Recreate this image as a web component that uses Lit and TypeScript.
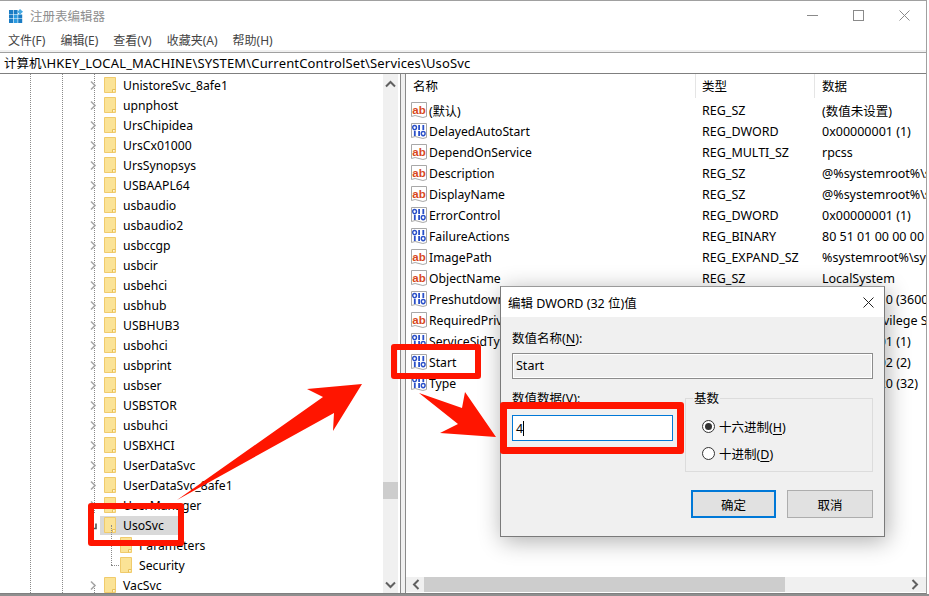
import { LitElement, html, css, svg } from 'lit';
import { customElement } from 'lit/decorators.js';

const TREE = [
  ['UnistoreSvc_8afe1', 'closed'], ['upnphost', 'closed'], ['UrsChipidea', 'closed'], ['UrsCx01000', 'closed'],
  ['UrsSynopsys', 'closed'], ['USBAAPL64', 'closed'], ['usbaudio', 'closed'], ['usbaudio2', 'closed'],
  ['usbccgp', 'closed'], ['usbcir', 'closed'], ['usbehci', 'closed'], ['usbhub', 'closed'],
  ['USBHUB3', 'closed'], ['usbohci', 'closed'], ['usbprint', 'closed'], ['usbser', 'closed'],
  ['USBSTOR', 'closed'], ['usbuhci', 'closed'], ['USBXHCI', 'closed'], ['UserDataSvc', 'closed'],
  ['UserDataSvc_8afe1', 'closed'], ['UserManager', 'closed'], ['UsoSvc', 'open'], ['Parameters', 'child'],
  ['Security', 'last'], ['VacSvc', 'closed'],
];

const VALUES = [
  ['sz', '(默认)', 'REG_SZ', '(数值未设置)'],
  ['bin', 'DelayedAutoStart', 'REG_DWORD', '0x00000001 (1)'],
  ['sz', 'DependOnService', 'REG_MULTI_SZ', 'rpcss'],
  ['sz', 'Description', 'REG_SZ', '@%systemroot%\\system32'],
  ['sz', 'DisplayName', 'REG_SZ', '@%systemroot%\\system32'],
  ['bin', 'ErrorControl', 'REG_DWORD', '0x00000001 (1)'],
  ['bin', 'FailureActions', 'REG_BINARY', '80 51 01 00 00 00 00 00'],
  ['sz', 'ImagePath', 'REG_EXPAND_SZ', '%systemroot%\\system32'],
  ['sz', 'ObjectName', 'REG_SZ', 'LocalSystem'],
  ['bin', 'PreshutdownTimeout', 'REG_DWORD', '0x00000e10 (3600)'],
  ['sz', 'RequiredPrivileges', 'REG_MULTI_SZ', 'SeAuditPrivilege SeChange'],
  ['bin', 'ServiceSidType', 'REG_DWORD', '0x00000001 (1)'],
  ['bin', 'Start', 'REG_DWORD', '0x00000002 (2)'],
  ['bin', 'Type', 'REG_DWORD', '0x00000020 (32)'],
];

const folderIcon = html`<svg class="folder" width="12" height="16" viewBox="0 0 12 16">
  <path d="M.5 .5H11.5V15.5H.5Z" fill="#fbe396" stroke="#f0cb6c"/>
  <path d="M8.5 15.5V12.5H11.5" fill="#fff6d6" stroke="#e8bf58"/>
</svg>`;

const chevron = (d: string, color = '#a6a6a6') => html`<svg width="9" height="11" viewBox="0 0 9 11">
  <path d=${d} fill="none" stroke=${color} stroke-width="1.6"/>
</svg>`;

const pageIcon = (inner: unknown) => html`<svg class="vicon" width="16" height="17" viewBox="0 0 16 17">
  <path d="M.5 .5H15.5V14.5Q12 16.5 8 14.5T.5 14.5Z" fill="#fff" stroke="#a8a8a8"/>
  ${inner}
</svg>`;

const szIcon = pageIcon(svg`<text x="8" y="11.5" text-anchor="middle" font-family="Liberation Sans, sans-serif" font-size="11.5" font-weight="700" fill="#d8481e">ab</text>`);

// "011" over "110", the usual binary value glyph
const binZeros = [[3.6, 4.6], [12.2, 10.6]];
const binOnes = [[7.2, 2], [11.4, 2], [2.9, 8], [7.2, 8]];
const binIcon = pageIcon(svg`
  ${binZeros.map(([x, y]) => svg`<ellipse cx=${x} cy=${y} rx="1.9" ry="2.1" fill="none" stroke="#2a50c8" stroke-width="1.4"/>`)}
  ${binOnes.map(([x, y]) => svg`<rect x=${x} y=${y} width="1.8" height="5" fill="#2a50c8"/>`)}
`);

@customElement('reg-tree')
export class RegTree extends LitElement {
  static styles = css`
    :host {
      display: flex;
      width: 400px;
      flex: none;
      min-height: 0;
    }
    .rows {
      flex: 1;
      position: relative;
      overflow: hidden;
      padding-top: 1px;
    }
    .guide {
      position: absolute;
      top: 0;
      bottom: 0;
      width: 0;
      border-left: 1px dotted #8a8a8a;
    }
    .row {
      height: 20px;
      display: flex;
      align-items: center;
      padding-left: 89px;
      position: relative;
      font-size: 12.2px;
      color: #000;
      white-space: nowrap;
    }
    .row.sub {
      padding-left: 120px;
    }
    .arrow {
      width: 15px;
      display: flex;
      position: relative;
    }
    .folder {
      margin-right: 7px;
      flex: none;
    }
    .selected {
      display: flex;
      align-items: center;
      background: #d9d9d9;
      height: 19px;
      width: 78px;
      margin-left: -4px;
      padding-left: 4px;
      box-sizing: border-box;
    }
    .hline {
      position: absolute;
      left: 111px;
      width: 8px;
      top: 10px;
      border-top: 1px dotted #8a8a8a;
    }
    .vline {
      position: absolute;
      left: 111px;
      top: -10px;
      height: 20px;
      border-left: 1px dotted #8a8a8a;
    }
    .bar {
      width: 15px;
      margin-right: 2px;
      background: #f0f0f0;
      display: flex;
      flex-direction: column;
      justify-content: space-between;
      align-items: center;
      position: relative;
      padding: 6px 0 4px;
      box-sizing: border-box;
    }
    .thumb {
      position: absolute;
      left: 0;
      right: 0;
      top: 408px;
      height: 17px;
      background: #cdcdcd;
    }
  `;

  render() {
    return html`
      <div class="rows">
        <div class="guide" style="left:30px"></div>
        <div class="guide" style="left:62px"></div>
        <div class="guide" style="left:94px;bottom:80px"></div>
        <div class="guide" style="left:94px;top:510px"></div>
        ${TREE.map(([name, kind]) => this.renderRow(name, kind))}
      </div>
      <div class="bar">
        <svg width="11" height="8" viewBox="0 0 11 8"><path d="M1 6.5L5.5 2L10 6.5" fill="none" stroke="#606060" stroke-width="2"/></svg>
        <div class="thumb"></div>
        <svg width="11" height="8" viewBox="0 0 11 8"><path d="M1 1.5L5.5 6L10 1.5" fill="none" stroke="#606060" stroke-width="2"/></svg>
      </div>
    `;
  }

  renderRow(name: string, kind: string) {
    if (kind === 'child' || kind === 'last') {
      return html`<div class="row sub">
        <span class="vline"></span><span class="hline"></span>
        ${folderIcon}<span>${name}</span>
      </div>`;
    }
    if (kind === 'open') {
      return html`<div class="row">
        <span class="arrow">${chevron('M2 8.5H7V3.5', '#555')}</span>
        <span class="selected">${folderIcon}<span>${name}</span></span>
      </div>`;
    }
    return html`<div class="row">
      <span class="arrow">${chevron('M2 1.5L6 5.5L2 9.5')}</span>
      ${folderIcon}<span>${name}</span>
    </div>`;
  }
}

@customElement('reg-list')
export class RegList extends LitElement {
  static styles = css`
    :host {
      flex: 1;
      min-width: 0;
      display: flex;
      flex-direction: column;
      font-size: 12.5px;
      color: #000;
      overflow: hidden;
    }
    .head {
      height: 26px;
      display: grid;
      grid-template-columns: 290px 119px 1fr;
      flex: none;
    }
    .head span {
      padding-left: 7px;
      line-height: 26px;
      border-right: 1px solid #e5e5e5;
      height: 24px;
    }
    .head span:nth-child(2) {
      padding-left: 6px;
    }
    .head span:last-child {
      border: 0;
    }
    .body {
      flex: 1;
      min-height: 0;
      overflow: hidden;
    }
    .row {
      height: 21px;
      display: grid;
      grid-template-columns: 296px 120px 1fr;
      align-items: center;
      white-space: nowrap;
    }
    .name {
      display: flex;
      align-items: center;
      gap: 2px;
      padding-left: 5px;
      overflow: hidden;
      font-size: 12.2px;
    }
    .vicon {
      flex: none;
    }
    .hbar {
      height: 15px;
      margin-bottom: 1px;
      flex: none;
      background: #f0f0f0;
      display: flex;
      align-items: center;
      justify-content: space-between;
      position: relative;
      padding: 0 7px 0 6px;
    }
    .hthumb {
      position: absolute;
      left: 18px;
      top: 0;
      bottom: 0;
      width: 361px;
      background: #cdcdcd;
    }
  `;

  render() {
    return html`
      <div class="head">
        <span>名称</span><span>类型</span><span>数据</span>
      </div>
      <div class="body">
        ${VALUES.map(([kind, name, type, data]) => html`
          <div class="row">
            <div class="name">${kind === 'sz' ? szIcon : binIcon}<span>${name}</span></div>
            <div>${type}</div>
            <div>${data}</div>
          </div>
        `)}
      </div>
      <div class="hbar">
        <svg width="8" height="11" viewBox="0 0 8 11"><path d="M6.5 1L2 5.5L6.5 10" fill="none" stroke="#606060" stroke-width="2"/></svg>
        <div class="hthumb"></div>
        <svg width="8" height="11" viewBox="0 0 8 11"><path d="M1.5 1L6 5.5L1.5 10" fill="none" stroke="#606060" stroke-width="2"/></svg>
      </div>
    `;
  }
}

@customElement('dword-dialog')
export class DwordDialog extends LitElement {
  static styles = css`
    :host {
      position: absolute;
      left: 500px;
      top: 286px;
      width: 385px;
      height: 251px;
      box-sizing: border-box;
      border: 1px solid #7a7a7a;
      border-top-color: #9a9a9a;
      background: #f0f0f0;
      box-shadow: 2px 4px 22px rgba(0, 0, 0, 0.32);
      display: flex;
      flex-direction: column;
      font-size: 12.5px;
      color: #000;
    }
    .title {
      height: 30px;
      flex: none;
      background: #fff;
      display: flex;
      align-items: center;
      justify-content: space-between;
      padding: 0 10px 0 7px;
    }
    .content {
      padding: 14px 11px 0;
      display: flex;
      flex-direction: column;
    }
    .label {
      height: 15px;
      line-height: 15px;
      margin-bottom: 7px;
    }
    u {
      text-underline-offset: 2px;
    }
    .field {
      height: 26px;
      box-sizing: border-box;
      border: 1px solid #7a7a7a;
      padding: 0 3px;
      line-height: 23px;
    }
    .field.off {
      background: #f0f0f0;
      border-color: #8c8c8c;
      box-shadow: inset 0 0 0 1px #fff;
    }
    .field.on {
      background: #fff;
      border-color: #0078d7;
      display: flex;
      align-items: center;
    }
    .caret {
      width: 1px;
      height: 15px;
      background: #000;
    }
    .columns {
      display: flex;
      gap: 12px;
      margin-top: 12px;
    }
    .left {
      width: 161px;
      flex: none;
    }
    .label.second {
      margin-bottom: 9px;
    }
    fieldset {
      flex: 1;
      margin: 0;
      padding: 7px 0 0;
      border: 1px solid #dcdcdc;
      height: 81px;
      box-sizing: border-box;
    }
    legend {
      padding: 0 1px;
      margin-left: 7px;
      line-height: 15px;
    }
    .radio {
      display: flex;
      align-items: center;
      gap: 4px;
      height: 27px;
      padding-left: 16px;
    }
    .actions {
      display: flex;
      justify-content: flex-end;
      gap: 11px;
      margin-top: 18px;
    }
    .btn {
      width: 86px;
      height: 28px;
      box-sizing: border-box;
      border: 1px solid #adadad;
      background: #e1e1e1;
      display: flex;
      align-items: center;
      justify-content: center;
    }
    .btn.primary {
      width: 85px;
      border: 2px solid #0078d7;
    }
  `;

  render() {
    return html`
      <div class="title">
        <span>编辑 DWORD (32 位)值</span>
        <svg width="11" height="11" viewBox="0 0 11 11"><path d="M.5 .5L10.5 10.5M10.5 .5L.5 10.5" stroke="#222" stroke-width="1"/></svg>
      </div>
      <div class="content">
        <div class="label">数值名称(<u>N</u>):</div>
        <div class="field off">Start</div>
        <div class="columns">
          <div class="left">
            <div class="label second">数值数据(<u>V</u>):</div>
            <div class="field on">4<span class="caret"></span></div>
          </div>
          <fieldset>
            <legend>基数</legend>
            <div class="radio">${this.renderRadio(true)}<span>十六进制(<u>H</u>)</span></div>
            <div class="radio">${this.renderRadio(false)}<span>十进制(<u>D</u>)</span></div>
          </fieldset>
        </div>
        <div class="actions">
          <div class="btn primary">确定</div>
          <div class="btn">取消</div>
        </div>
      </div>
    `;
  }

  renderRadio(on: boolean) {
    return html`<svg width="13" height="13" viewBox="0 0 13 13">
      <circle cx="6.5" cy="6.5" r="6" fill="#fff" stroke="#333"/>
      ${on ? svg`<circle cx="6.5" cy="6.5" r="3.5" fill="#333"/>` : ''}
    </svg>`;
  }
}

@customElement('app-root')
export class AppRoot extends LitElement {
  static styles = css`
    :host {
      display: block;
      position: relative;
      width: 929px;
      height: 596px;
      overflow: hidden;
      background: #fff;
      font-family: "Noto Sans", "Noto Sans CJK SC", sans-serif;
    }
    .window {
      box-sizing: border-box;
      width: 927px;
      height: 594px;
      border-top: 1px solid #a0a0a0;
      border-bottom: 1px solid #808080;
      border-right: 1px solid #a0a0a0;
      display: flex;
      flex-direction: column;
      background: #f0f0f0;
    }
    .ground {
      height: 2px;
      background: #8f8f8f;
    }
    .title {
      height: 29px;
      flex: none;
      background: #fff;
      display: flex;
      align-items: center;
      padding-left: 9px;
      gap: 7px;
      font-size: 12.5px;
      color: #8f8f8f;
    }
    .title .grow {
      flex: 1;
    }
    .controls {
      display: flex;
      align-items: center;
      gap: 35px;
      padding-right: 16px;
    }
    .menu {
      height: 20px;
      flex: none;
      background: #fff;
      display: flex;
      align-items: center;
      gap: 15px;
      padding-left: 8px;
      font-size: 12px;
      color: #444;
    }
    .address {
      height: 22px;
      flex: none;
      margin-top: 2px;
      background: #fff;
      border-top: 1px solid #a0a0a0;
      border-bottom: 1px solid #7f7f7f;
      padding-left: 4px;
      font-size: 12.5px;
      line-height: 20px;
      color: #000;
      box-sizing: border-box;
      white-space: nowrap;
    }
    .address .path {
      font-size: 13px;
      letter-spacing: 0.16px;
    }
    .panes {
      flex: 1;
      min-height: 0;
      display: flex;
      background: #fff;
    }
    .split {
      width: 6px;
      flex: none;
      box-sizing: border-box;
      border-left: 1px solid #8a8a8a;
      border-right: 1px solid #8a8a8a;
      background: #f0f0f0;
    }
    .mark {
      position: absolute;
      box-sizing: border-box;
      border-style: solid;
      border-color: #ff1500;
      border-radius: 3px;
    }
    .arrows {
      position: absolute;
      inset: 0;
      pointer-events: none;
    }
  `;

  render() {
    return html`
      <div class="window">
        <div class="title">
          <svg width="14" height="14" viewBox="0 0 14 14">
            <path d="M0 1H4V5H0ZM4.6 1H8.6V5H4.6ZM0 5.5H4V9.5H0ZM9.2 5.5H13.2V9.5H9.2ZM0 10H4V14H0ZM9.2 10H13.2V14H9.2Z" fill="#1a7cc4"/>
            <path d="M4.6 5.5H8.6V9.5H4.6ZM4.6 10H8.6V14H4.6Z" fill="#2c9be0"/>
            <path d="M11 0L14 2.7L11 5.4L8.4 2.7Z" fill="#45a9e2"/>
          </svg>
          <span>注册表编辑器</span>
          <span class="grow"></span>
          <div class="controls">
            <svg width="11" height="11" viewBox="0 0 11 11"><path d="M0 5.5H11" stroke="#8a8a8a"/></svg>
            <svg width="11" height="11" viewBox="0 0 11 11"><rect x=".5" y=".5" width="10" height="10" fill="none" stroke="#8a8a8a"/></svg>
            <svg width="11" height="11" viewBox="0 0 11 11"><path d="M.5 .5L10.5 10.5M10.5 .5L.5 10.5" stroke="#8a8a8a"/></svg>
          </div>
        </div>
        <div class="menu">
          <span>文件(F)</span><span>编辑(E)</span><span>查看(V)</span><span>收藏夹(A)</span><span>帮助(H)</span>
        </div>
        <div class="address">计算机<span class="path">\\HKEY_LOCAL_MACHINE\\SYSTEM\\CurrentControlSet\\Services\\UsoSvc</span></div>
        <div class="panes">
          <reg-tree></reg-tree>
          <div class="split"></div>
          <reg-list></reg-list>
        </div>
      </div>
      <div class="ground"></div>
      <dword-dialog></dword-dialog>
      <div class="mark" style="left:88px;top:503px;width:96px;height:43px;border-width:6px"></div>
      <div class="mark" style="left:391px;top:344px;width:90px;height:35px;border-width:6px"></div>
      <div class="mark" style="left:500px;top:402px;width:184px;height:52px;border-width:7px"></div>
      <svg class="arrows" width="929" height="596" viewBox="0 0 929 596">
        <polygon fill="#ff1500" points="362,384 307,389 323,397 177,500 334,413 333,431"/>
        <polygon fill="#ff1500" points="419,393 462,408 465,392 496,437 440,433 458,424"/>
      </svg>
    `;
  }
}
